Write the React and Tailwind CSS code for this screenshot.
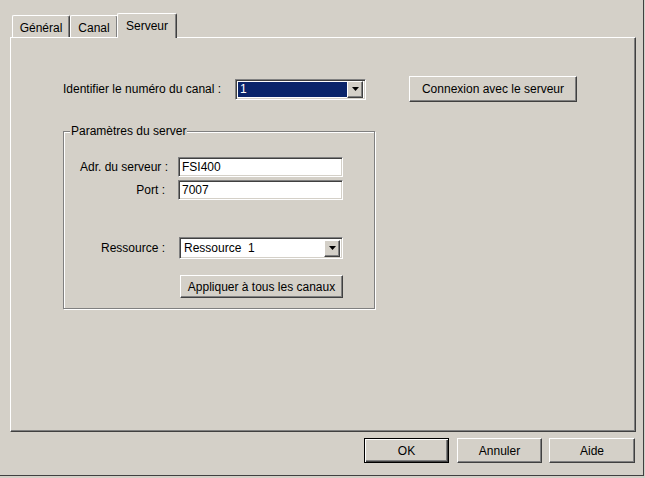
import React from "react";

const raised =
  "bg-[#d4d0c8] border border-t-white border-l-white border-r-[#404040] border-b-[#404040] shadow-[inset_-1px_-1px_0_#808080]";
const sunken =
  "bg-white border border-t-[#808080] border-l-[#808080] border-r-white border-b-white shadow-[inset_1px_1px_0_#404040,inset_-1px_-1px_0_#d4d0c8]";

function Arrow() {
  return (
    <svg width="7" height="4" viewBox="0 0 7 4" className="block">
      <path d="M0 0H7L3.5 4Z" fill="#000" />
    </svg>
  );
}

function DropBtn() {
  return (
    <div className={`${raised} w-[16px] h-[17px] flex items-center justify-center shrink-0`}>
      <Arrow />
    </div>
  );
}

function Button({ children, className = "" }) {
  return (
    <div className={`${raised} flex items-center justify-center ${className}`}>
      {children}
    </div>
  );
}

export default function App() {
  return (
    <div className="w-[645px] h-[478px] bg-[#d4d0c8] overflow-hidden text-[12px] text-black font-['Liberation_Sans',Arial,sans-serif] leading-none">
      <div className="w-[644px] h-[476px] border-r border-b border-r-[#404040] border-b-[#404040] flex flex-col">
        {/* Tabs */}
        <div className="flex items-end h-[25px] mt-[12px] ml-[12px] relative z-10">
          <div className="h-[22px] w-[58px] border-t border-l border-r border-t-white border-l-white border-r-[#404040] rounded-tl-[2px] rounded-tr-[2px] shadow-[inset_-1px_0_0_#808080] flex items-center justify-center pt-[2px]">
            Général
          </div>
          <div className="h-[22px] w-[48px] border-t border-l border-r border-t-white border-l-white border-r-[#404040] rounded-tl-[2px] rounded-tr-[2px] shadow-[inset_-1px_0_0_#808080] flex items-center justify-center pt-[2px]">
            Canal
          </div>
          <div className="h-[25px] w-[60px] -ml-[1px] -mb-[1px] bg-[#d4d0c8] border-t border-l border-r border-t-white border-l-white border-r-[#404040] rounded-tl-[2px] rounded-tr-[2px] shadow-[inset_-1px_0_0_#808080] flex items-start justify-center pt-[6px]">
            Serveur
          </div>
        </div>

        {/* Panel */}
        <div className="ml-[10px] w-[626px] h-[395px] border border-t-white border-l-white border-r-[#404040] border-b-[#404040] shadow-[inset_-1px_-1px_0_#808080] flex flex-col">
          {/* Row 1 */}
          <div className="flex items-center mt-[38px] ml-[52px] h-[26px]">
            <div className="w-[172px]">Identifier le numéro du canal :</div>
            <div className={`${sunken} w-[131px] h-[21px] flex items-center p-[2px]`}>
              <div className="flex-1 h-full bg-[#0a246a] text-white flex items-center pl-[2px]">1</div>
              <DropBtn />
            </div>
            <Button className="ml-[43px] w-[168px] h-[26px]">Connexion avec le serveur</Button>
          </div>

          {/* Group box */}
          <div className="relative mt-[29px] ml-[52px] w-[312px] h-[178px] border border-[#808080] shadow-[inset_1px_1px_0_white,1px_1px_0_white]">
            <div className="absolute left-[6px] -top-[7px] bg-[#d4d0c8] px-[1px]">Paramètres du server</div>
            <div className="pt-[25px] flex flex-col">
              <div className="flex items-center h-[20px]">
                <div className="w-[104px] text-right">Adr. du serveur :</div>
                <div className={`${sunken} ml-[10px] w-[165px] h-[20px] flex items-center pl-[3px]`}>FSI400</div>
              </div>
              <div className="flex items-center h-[20px] mt-[3px]">
                <div className="w-[101px] text-right">Port :</div>
                <div className={`${sunken} ml-[13px] w-[165px] h-[20px] flex items-center pl-[3px]`}>7007</div>
              </div>
              <div className="flex items-center h-[22px] mt-[37px]">
                <div className="w-[101px] text-right">Ressource :</div>
                <div className={`${sunken} ml-[14px] w-[164px] h-[22px] flex items-center p-[2px]`}>
                  <div className="flex-1 pl-[2px]">Ressource&nbsp;&nbsp;1</div>
                  <DropBtn />
                </div>
              </div>
              <Button className="ml-[116px] mt-[16px] w-[163px] h-[23px]">Appliquer à tous les canaux</Button>
            </div>
          </div>
        </div>

        {/* Bottom buttons */}
        <div className="flex justify-end mt-[6px] pr-[8px]">
          <div className="w-[85px] h-[25px] border border-black bg-[#d4d0c8] shadow-[inset_1px_1px_0_white,inset_-1px_-1px_0_#404040,inset_-2px_-2px_0_#808080] flex items-center justify-center">
            OK
          </div>
          <Button className="ml-[8px] w-[85px] h-[25px]">Annuler</Button>
          <Button className="ml-[7px] w-[86px] h-[25px]">Aide</Button>
        </div>
      </div>
    </div>
  );
}
